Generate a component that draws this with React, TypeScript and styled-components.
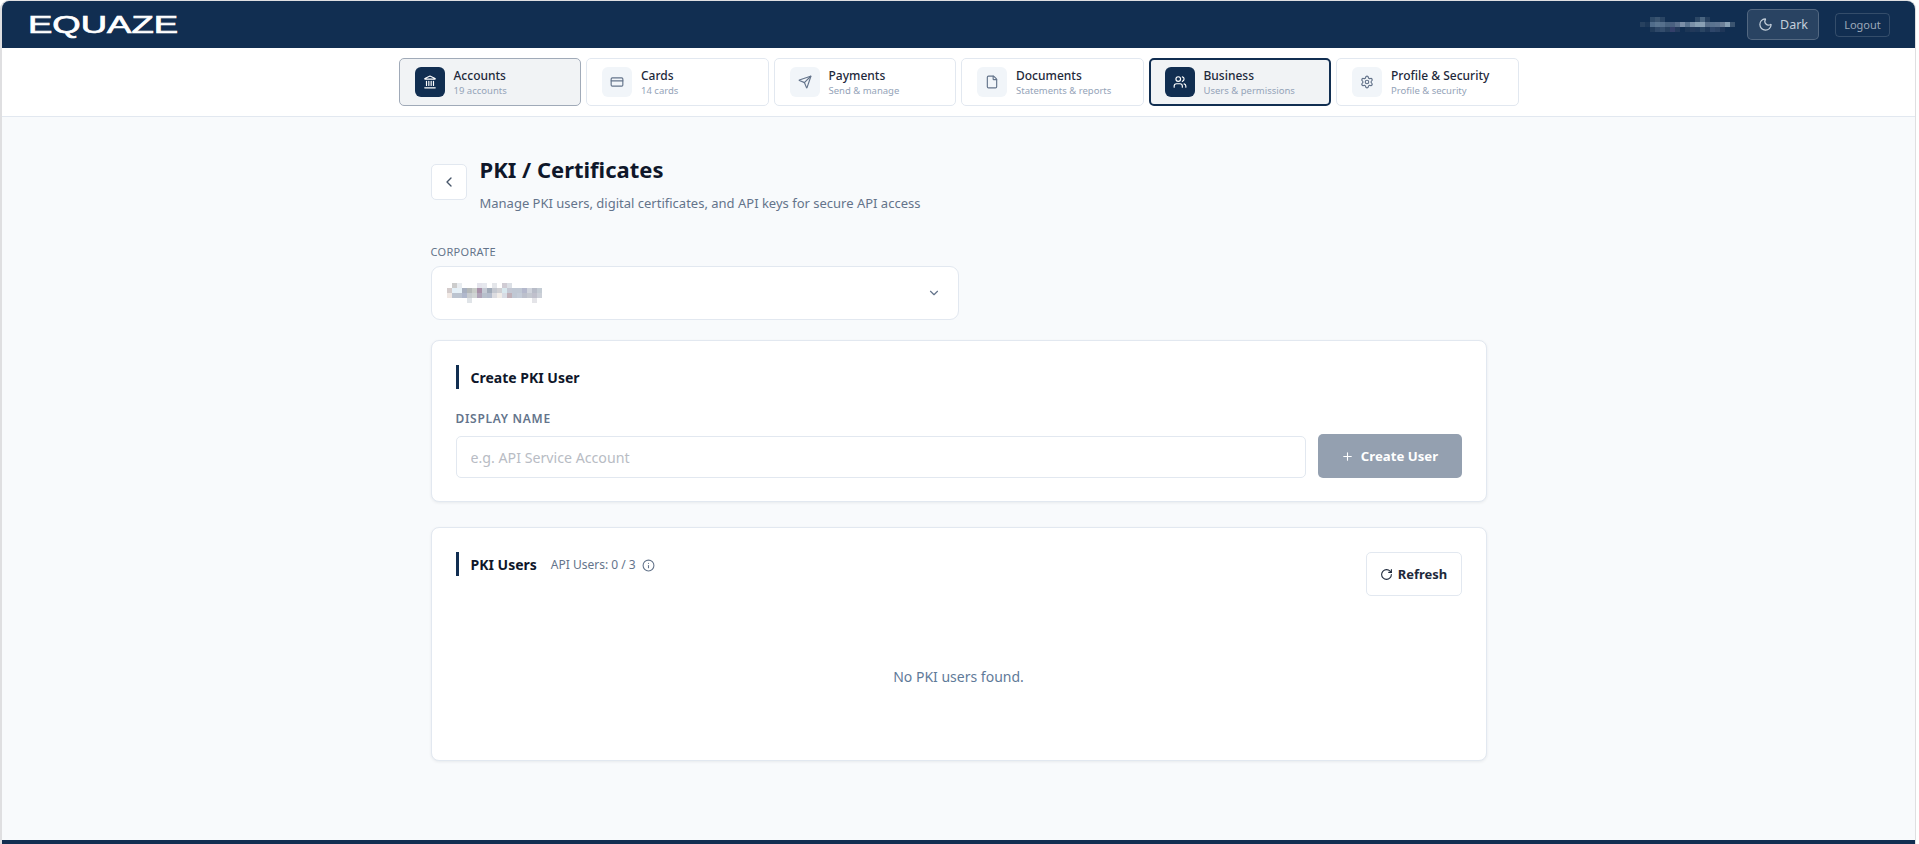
import React from "react";
import styled, { createGlobalStyle } from "styled-components";
import { Landmark, CreditCard, Send, File, Users, Settings, Moon, ChevronLeft, ChevronDown, Plus, RotateCw, Info } from "lucide-react";

const Global = createGlobalStyle`
  * { box-sizing: border-box; }
  html, body { margin: 0; padding: 0; height: 100%; background: #fff; overflow: hidden; }
  body { font-family: "Noto Sans", "Open Sans", sans-serif; }
`;

const Frame = styled.div`
  height: 844px;
  margin-right: 3px;
  display: flex;
  flex-direction: column;
  border-left: 2px solid #dfdfe1;
  border-right: 1px solid #dfdfe1;
  border-top: 1px solid #dfdfe1;
  border-radius: 9px 9px 0 0;
  overflow: hidden;
  background: #f8fafc;
`;

const Header = styled.header`
  height: 47px;
  flex: none;
  background: #112e51;
  display: flex;
  align-items: center;
  justify-content: space-between;
  padding: 0 25px 0 26px;
`;

const Logo = styled.div`
  font-family: "Liberation Sans", sans-serif;
  font-size: 24px;
  line-height: 1;
  color: #fff;
  -webkit-text-stroke: 0.7px #fff;
  transform: scaleX(1.52);
  transform-origin: left center;
`;

const HeaderRight = styled.div`
  display: flex;
  align-items: center;
`;

const Mosaic = styled.svg`
  display: block;
  flex: none;
  shape-rendering: crispEdges;
`;

const MailMosaic = styled(Mosaic)`
  margin-right: 12px;
`;

const ThemeButton = styled.button`
  display: flex;
  align-items: center;
  gap: 7px;
  height: 31px;
  width: 72px;
  justify-content: center;
  background: rgba(255, 255, 255, 0.1);
  border: 1px solid rgba(255, 255, 255, 0.2);
  border-radius: 5px;
  color: #c3ceda;
  font: 400 12.5px "Noto Sans", sans-serif;
  margin-right: 16px;
`;

const LogoutButton = styled.button`
  height: 24px;
  width: 55px;
  background: transparent;
  border: 1px solid rgba(255, 255, 255, 0.15);
  border-radius: 4px;
  color: #9ba8b8;
  font: 400 11px "Noto Sans", sans-serif;
  padding: 0;
`;

const Nav = styled.nav`
  height: 69px;
  flex: none;
  background: #fff;
  border-bottom: 1px solid #e2e8f0;
  display: flex;
  justify-content: center;
  align-items: flex-start;
  gap: 5px;
  padding-top: 10px;
`;

const Tab = styled.div<{ $active?: boolean; $focus?: boolean }>`
  width: 182.5px;
  height: 48px;
  display: flex;
  align-items: center;
  gap: 9px;
  padding-left: ${(p) => (p.$focus ? 14 : 15)}px;
  border-radius: 5px;
  background: ${(p) => (p.$active || p.$focus ? "#f1f3f5" : "#fff")};
  border: ${(p) => (p.$focus ? "2px solid #112e51" : p.$active ? "1px solid #a0aab8" : "1px solid #e2e8f0")};
`;

const TabIcon = styled.span<{ $active?: boolean }>`
  width: 30px;
  height: 30px;
  flex: none;
  border-radius: 6px;
  display: flex;
  align-items: center;
  justify-content: center;
  background: ${(p) => (p.$active ? "#112e51" : "#f1f5f9")};
  color: ${(p) => (p.$active ? "#fff" : "#64748b")};
`;

const TabText = styled.span`
  display: flex;
  flex-direction: column;
  padding-top: 1px;
`;

const TabTitle = styled.span`
  font-size: 12px;
  line-height: 16px;
  font-weight: 500;
  color: #1e293b;
`;

const TabSub = styled.span`
  font-size: 9.5px;
  line-height: 14px;
  color: #94a3b8;
`;

const Main = styled.main`
  flex: 1;
  min-height: 0;
  width: 1056px;
  margin: 0 auto;
  padding-top: 38px;
`;

const TitleRow = styled.div`
  display: flex;
  gap: 13px;
  align-items: flex-start;
`;

const BackButton = styled.button`
  width: 36px;
  height: 36px;
  margin-top: 9px;
  background: #fff;
  border: 1px solid #e2e8f0;
  border-radius: 5px;
  color: #475569;
  display: flex;
  align-items: center;
  justify-content: center;
  padding: 0;
`;

const Title = styled.h1`
  margin: 0;
  font-size: 22px;
  line-height: 28px;
  font-weight: 700;
  color: #0f172a;
`;

const Subtitle = styled.p`
  margin: 11px 0 0;
  font-size: 13px;
  line-height: 18px;
  color: #64748b;
`;

const CorpLabel = styled.div`
  margin-top: 33px;
  font-size: 11px;
  line-height: 14px;
  color: #64748b;
  letter-spacing: 0.3px;
`;

const CorpSelect = styled.div`
  margin: 7px 0 20px;
  width: 528px;
  height: 54px;
  background: #fff;
  border: 1px solid #e2e8f0;
  border-radius: 9px;
  display: flex;
  align-items: center;
  justify-content: space-between;
  padding: 0 17px 0 15px;
  color: #64748b;
`;

const Card = styled.section<{ $h: number }>`
  margin-bottom: 25px;
  height: ${(p) => p.$h}px;
  background: #fff;
  border: 1px solid #e2e8f0;
  border-radius: 8px;
  box-shadow: 0 1px 3px rgba(15, 23, 42, 0.07);
  padding: 24px;
`;

const CardHeadRow = styled.div`
  display: flex;
  justify-content: space-between;
  align-items: flex-start;
`;

const CardTitle = styled.h2`
  margin: 0;
  height: 24px;
  border-left: 3px solid #112e51;
  padding: 2px 0 0 12px;
  font-size: 14px;
  line-height: 22px;
  font-weight: 700;
  color: #0f172a;
  display: flex;
  align-items: center;
`;

const Quota = styled.span`
  display: inline-flex;
  align-items: center;
  gap: 6px;
  margin-left: 14px;
  font-size: 12px;
  font-weight: 400;
  color: #64748b;
`;

const FieldLabel = styled.div`
  margin-top: 22px;
  font-size: 12px;
  line-height: 16px;
  font-weight: 600;
  letter-spacing: 0.7px;
  color: #64748b;
`;

const FormRow = styled.div`
  margin-top: 7px;
  display: flex;
  gap: 12px;
  align-items: flex-end;
`;

const TextInput = styled.input`
  flex: 1;
  min-width: 0;
  height: 42px;
  background: #fff;
  border: 1px solid #e2e8f0;
  border-radius: 5px;
  padding: 0 14px;
  font: 400 14.2px "Noto Sans", sans-serif;
  &::placeholder { color: #b8bcc4; opacity: 1; }
`;

const CreateButton = styled.button`
  width: 144px;
  height: 44px;
  flex: none;
  display: flex;
  align-items: center;
  justify-content: center;
  gap: 7px;
  background: #94a0b0;
  border: none;
  border-radius: 5px;
  color: #fff;
  font: 700 13.2px "Noto Sans", sans-serif;
`;

const RefreshButton = styled.button`
  width: 96px;
  height: 44px;
  display: flex;
  align-items: center;
  justify-content: center;
  gap: 5px;
  background: #fff;
  border: 1px solid #e2e8f0;
  border-radius: 5px;
  color: #1e293b;
  font: 700 13px "Noto Sans", sans-serif;
`;

const Empty = styled.div`
  margin-top: 71px;
  text-align: center;
  font-size: 14px;
  line-height: 20px;
  color: #5f7a99;
`;

const Footer = styled.footer`
  height: 4px;
  flex: none;
  background: #112e51;
`;

const tabs = [
  { icon: <Landmark size={14} />, title: "Accounts", sub: "19 accounts", active: true },
  { icon: <CreditCard size={14} />, title: "Cards", sub: "14 cards" },
  { icon: <Send size={14} />, title: "Payments", sub: "Send & manage" },
  { icon: <File size={14} />, title: "Documents", sub: "Statements & reports" },
  { icon: <Users size={14} />, title: "Business", sub: "Users & permissions", focus: true },
  { icon: <Settings size={14} />, title: "Profile & Security", sub: "Profile & security" },
];

type Cell = [number, number, string];

const mailCells: Cell[] = [
  [0, 2, "#2e4a68"], [0, 3, "#3a5470"], [0, 4, "#2a4564"], [0, 11, "#2c4765"], [0, 12, "#4a6580"], [0, 13, "#253f5e"],
  [1, 0, "#27415f"], [1, 1, "#1c3757"], [1, 2, "#506c8a"], [1, 3, "#5a7590"], [1, 4, "#56708c"], [1, 5, "#48627f"],
  [1, 6, "#4a6080"], [1, 7, "#5a6f8c"], [1, 8, "#7b8fa8"], [1, 9, "#5a7490"], [1, 10, "#7a90a8"], [1, 11, "#88a0b4"],
  [1, 12, "#8aa0b4"], [1, 13, "#586f8a"], [1, 14, "#5a7390"], [1, 15, "#5e7592"], [1, 16, "#6c8098"], [1, 17, "#88a0b4"], [1, 18, "#3b5470"],
  [2, 2, "#203b5a"], [2, 3, "#2e4868"], [2, 4, "#334d6c"], [2, 5, "#26405f"], [2, 6, "#333f6a"], [2, 7, "#233a5c"],
  [2, 9, "#1c3656"], [2, 10, "#22395a"], [2, 11, "#1e385a"], [2, 12, "#2a4563"], [2, 13, "#1e3859"], [2, 14, "#2e466a"], [2, 15, "#2a4264"], [2, 16, "#1e3658"],
];

const corpCells: Cell[] = [
  [0, 1, "#cccccc"], [0, 2, "#e8ecf0"], [0, 6, "#e4e4ec"], [0, 7, "#e6e8ee"], [0, 9, "#e4e6ea"], [0, 11, "#d0ccd4"], [0, 12, "#dce0e6"],
  [1, 0, "#d4cccc"], [1, 1, "#e4f0f8"], [1, 2, "#e6f0f6"], [1, 3, "#a8b0c0"], [1, 4, "#b4b8b8"], [1, 5, "#c8ccc8"], [1, 6, "#a890a8"],
  [1, 7, "#c4cad4"], [1, 8, "#a0aab8"], [1, 9, "#c4c8d0"], [1, 10, "#d0d0d4"], [1, 11, "#d8e8ee"], [1, 12, "#c4c8d4"], [1, 13, "#c0c8d4"],
  [1, 14, "#c0c8d4"], [1, 15, "#b4b8cc"], [1, 16, "#d0d4dc"], [1, 17, "#b8bcc8"], [1, 18, "#c4ccd4"],
  [2, 0, "#f0e8e4"], [2, 1, "#bcc4d0"], [2, 2, "#bcc4d0"], [2, 3, "#b0b8cc"], [2, 4, "#c8ccd0"], [2, 5, "#d0d4d4"], [2, 6, "#b0a4b8"],
  [2, 7, "#b8c0cc"], [2, 8, "#b4bccc"], [2, 9, "#dcdce0"], [2, 10, "#f0ece8"], [2, 11, "#d8dce4"], [2, 12, "#c0b0b8"], [2, 13, "#c0c8d4"],
  [2, 14, "#c4ccd8"], [2, 15, "#bcc0cc"], [2, 16, "#c4c8d0"], [2, 17, "#c0c0cc"], [2, 18, "#ccd0d8"],
  [3, 4, "#e0e4e8"], [3, 17, "#e4e4e8"],
];

const cellRects = (cells: Cell[]) =>
  cells.map(([r, c, fill]) => <rect key={`${r}-${c}`} x={c * 5} y={r * 5} width={5} height={5} fill={fill} />);

export default function App() {
  return (
    <Frame>
      <Global />
      <Header>
        <Logo>EQUAZE</Logo>
        <HeaderRight>
          <MailMosaic width={95} height={15} viewBox="0 0 95 15">{cellRects(mailCells)}</MailMosaic>
          <ThemeButton><Moon size={15} />Dark</ThemeButton>
          <LogoutButton>Logout</LogoutButton>
        </HeaderRight>
      </Header>
      <Nav>
        {tabs.map((t) => (
          <Tab key={t.title} $active={t.active} $focus={t.focus}>
            <TabIcon $active={t.active || t.focus}>{t.icon}</TabIcon>
            <TabText>
              <TabTitle>{t.title}</TabTitle>
              <TabSub>{t.sub}</TabSub>
            </TabText>
          </Tab>
        ))}
      </Nav>
      <Main>
        <TitleRow>
          <BackButton><ChevronLeft size={16} /></BackButton>
          <div>
            <Title>PKI / Certificates</Title>
            <Subtitle>Manage PKI users, digital certificates, and API keys for secure API access</Subtitle>
          </div>
        </TitleRow>
        <CorpLabel>CORPORATE</CorpLabel>
        <CorpSelect>
          <Mosaic width={95} height={20} viewBox="0 0 95 20">{cellRects(corpCells)}</Mosaic>
          <ChevronDown size={14} />
        </CorpSelect>
        <Card $h={162}>
          <CardTitle>Create PKI User</CardTitle>
          <FieldLabel>DISPLAY NAME</FieldLabel>
          <FormRow>
            <TextInput placeholder="e.g. API Service Account" />
            <CreateButton><Plus size={13} />Create User</CreateButton>
          </FormRow>
        </Card>
        <Card $h={234}>
          <CardHeadRow>
            <CardTitle>
              PKI Users
              <Quota>API Users: 0 / 3 <Info size={13} /></Quota>
            </CardTitle>
            <RefreshButton><RotateCw size={13} />Refresh</RefreshButton>
          </CardHeadRow>
          <Empty>No PKI users found.</Empty>
        </Card>
      </Main>
      <Footer />
    </Frame>
  );
}
